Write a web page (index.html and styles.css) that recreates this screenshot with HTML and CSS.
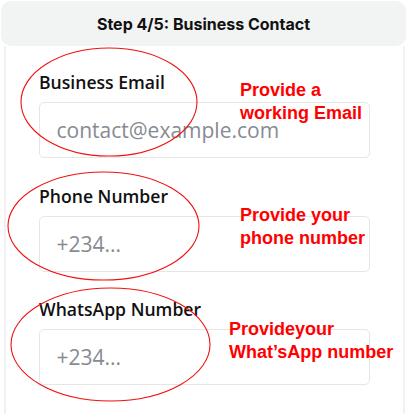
FILE: index.html
```html
<!DOCTYPE html>
<html lang="en">
<head>
<meta charset="utf-8">
<title>Step 4/5: Business Contact</title>
<link rel="stylesheet" href="styles.css">
</head>
<body>
<div class="page">
  <div class="header">Step 4/5: Business Contact</div>
  <div class="card">
    <div class="field">
      <label class="label" for="email">Business Email</label>
      <input class="input" id="email" type="email" placeholder="contact@example.com">
    </div>
    <div class="field">
      <label class="label" for="phone">Phone Number</label>
      <input class="input" id="phone" type="tel" placeholder="+234...">
    </div>
    <div class="field">
      <label class="label" for="wa">WhatsApp Number</label>
      <input class="input" id="wa" type="tel" placeholder="+234...">
    </div>
  </div>
  <svg class="marks" width="408" height="414" viewBox="0 0 408 414" aria-hidden="true">
    <ellipse cx="109" cy="102" rx="88" ry="54" fill="none" stroke="#f01010" stroke-width="1.1"/>
    <ellipse cx="103.5" cy="226" rx="95.5" ry="54" fill="none" stroke="#f01010" stroke-width="1.1"/>
    <ellipse cx="110.5" cy="344.5" rx="99.5" ry="56.5" fill="none" stroke="#f01010" stroke-width="1.1"/>
  </svg>
  <div class="note note-1">Provide a<br>working Email</div>
  <div class="note note-2">Provide your<br>phone number</div>
  <div class="note note-3">Provideyour<br>What’sApp number</div>
</div>
</body>
</html>
```

FILE: styles.css
```css
html, body {
  margin: 0;
  padding: 0;
  background: #ffffff;
}
.page {
  position: relative;
  width: 408px;
  height: 414px;
  overflow: hidden;
  padding: 1px 2px 0 1px;
  box-sizing: border-box;
}
.header {
  height: 45px;
  background: #f2f3f3;
  border-radius: 10px;
  display: flex;
  align-items: center;
  justify-content: center;
  font-family: Inter, "Liberation Sans", sans-serif;
  font-weight: 700;
  font-size: 16px;
  color: #111111;
}
.card {
  margin: 0 1px 0 3px;
  border-left: 2px solid #f1f1f1;
  border-right: 2px solid #f1f1f1;
  padding: 24px 33px 40px 33px;
  display: flex;
  flex-direction: column;
  gap: 25.5px;
}
.field {
  display: flex;
  flex-direction: column;
}
.label {
  font-family: "Open Sans", "Noto Sans", sans-serif;
  font-weight: 600;
  font-size: 17.6px;
  line-height: 24px;
  color: #111111;
  margin-bottom: 8px;
}
.input {
  box-sizing: border-box;
  height: 56px;
  width: 100%;
  border: 1.5px solid #e6e6e6;
  border-radius: 5px;
  padding: 0 16.5px;
  font-family: "Open Sans", "Noto Sans", sans-serif;
  font-size: 21px;
  background: #ffffff;
  outline: none;
}
.input::placeholder {
  color: #868b92;
}
.marks {
  position: absolute;
  left: 0;
  top: 0;
  pointer-events: none;
}
.note {
  position: absolute;
  font-family: "Liberation Sans", Arial, sans-serif;
  font-weight: 700;
  font-size: 18px;
  line-height: 23px;
  color: #ff0000;
}
.note-1 { left: 240px; top: 79px; }
.note-2 { left: 240px; top: 204px; }
.note-3 { left: 229px; top: 318px; }
```
